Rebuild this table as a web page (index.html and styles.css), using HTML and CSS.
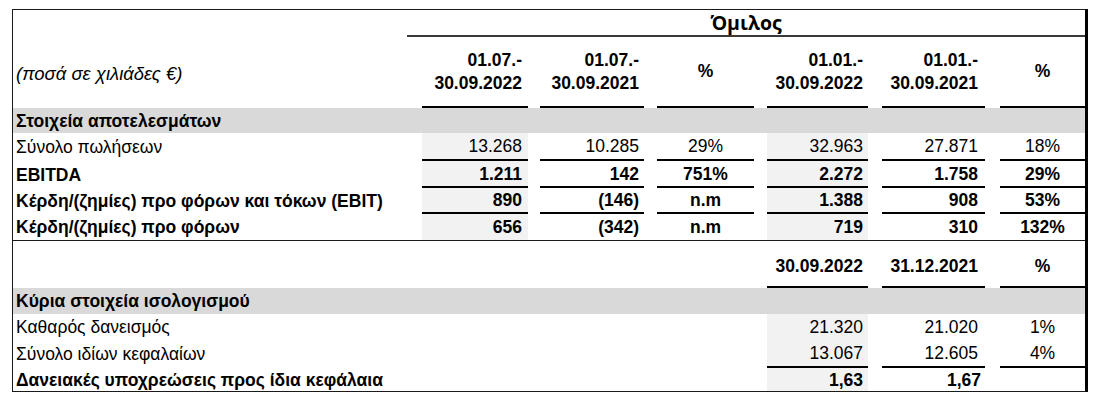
FILE: index.html
```html
<!DOCTYPE html>
<html lang="el">
<head>
<meta charset="utf-8">
<title>Όμιλος</title>
<link rel="stylesheet" href="styles.css">
</head>
<body>
<table class="fin">
  <colgroup>
    <col class="w-label">
    <col class="w-sp0">
    <col class="w-c1">
    <col class="w-sp1">
    <col class="w-c2">
    <col class="w-sp2">
    <col class="w-c3">
    <col class="w-sp3">
    <col class="w-c4">
    <col class="w-sp4">
    <col class="w-c5">
    <col class="w-sp5">
    <col class="w-c6">
  </colgroup>
  <tbody>
    <tr class="r-title">
      <td></td>
      <td colspan="12" class="title">Όμιλος</td>
    </tr>
    <tr class="r-head">
      <td class="label units">(ποσά σε χιλιάδες €)</td>
      <td></td>
      <td class="num b line p6">01.07.-<br>30.09.2022</td>
      <td></td>
      <td class="num b line">01.07.-<br>30.09.2021</td>
      <td></td>
      <td class="pct b line">%</td>
      <td></td>
      <td class="num b line">01.01.-<br>30.09.2022</td>
      <td></td>
      <td class="num b line p7">01.01.-<br>30.09.2021</td>
      <td></td>
      <td class="pct b line">%</td>
    </tr>
    <tr class="r-sec1">
      <td colspan="13" class="section">Στοιχεία αποτελεσμάτων</td>
    </tr>
    <tr class="r-1">
      <td class="label">Σύνολο πωλήσεων</td>
      <td></td>
      <td class="num shade line p6">13.268</td>
      <td></td>
      <td class="num line">10.285</td>
      <td></td>
      <td class="pct line">29%</td>
      <td></td>
      <td class="num shade line">32.963</td>
      <td></td>
      <td class="num line p7">27.871</td>
      <td></td>
      <td class="pct line">18%</td>
    </tr>
    <tr class="r-2 b">
      <td class="label">EBITDA</td>
      <td></td>
      <td class="num shade line p6">1.211</td>
      <td></td>
      <td class="num line">142</td>
      <td></td>
      <td class="pct line">751%</td>
      <td></td>
      <td class="num shade line">2.272</td>
      <td></td>
      <td class="num line p7">1.758</td>
      <td></td>
      <td class="pct line">29%</td>
    </tr>
    <tr class="r-3 b">
      <td class="label">Κέρδη/(ζημίες) προ φόρων και τόκων (EBIT)</td>
      <td></td>
      <td class="num shade line p6">890</td>
      <td></td>
      <td class="num line">(146)</td>
      <td></td>
      <td class="pct line">n.m</td>
      <td></td>
      <td class="num shade line">1.388</td>
      <td></td>
      <td class="num line p7">908</td>
      <td></td>
      <td class="pct line">53%</td>
    </tr>
    <tr class="r-4 b thin">
      <td class="label">Κέρδη/(ζημίες) προ φόρων</td>
      <td></td>
      <td class="num shade p6">656</td>
      <td></td>
      <td class="num">(342)</td>
      <td></td>
      <td class="pct">n.m</td>
      <td></td>
      <td class="num shade">719</td>
      <td></td>
      <td class="num p7">310</td>
      <td></td>
      <td class="pct">132%</td>
    </tr>
    <tr class="r-bhead">
      <td colspan="8"></td>
      <td class="num b line">30.09.2022</td>
      <td></td>
      <td class="num b line p7">31.12.2021</td>
      <td></td>
      <td class="pct b line">%</td>
    </tr>
    <tr class="r-sec2">
      <td colspan="13" class="section">Κύρια στοιχεία ισολογισμού</td>
    </tr>
    <tr class="r-b1">
      <td class="label">Καθαρός δανεισμός</td>
      <td colspan="7"></td>
      <td class="num shade">21.320</td>
      <td></td>
      <td class="num p7">21.020</td>
      <td></td>
      <td class="pct">1%</td>
    </tr>
    <tr class="r-b2">
      <td class="label">Σύνολο ιδίων κεφαλαίων</td>
      <td colspan="7"></td>
      <td class="num shade line">13.067</td>
      <td></td>
      <td class="num line p7">12.605</td>
      <td></td>
      <td class="pct line">4%</td>
    </tr>
    <tr class="r-b3 b">
      <td class="label">Δανειακές υποχρεώσεις προς ίδια κεφάλαια</td>
      <td colspan="7"></td>
      <td class="num shade">1,63</td>
      <td></td>
      <td class="num p4">1,67</td>
      <td></td>
      <td class="pct"></td>
    </tr>
  </tbody>
</table>
</body>
</html>
```

FILE: styles.css
```css
html, body {
  margin: 0;
  padding: 0;
  background: #ffffff;
}

body {
  padding: 9px 0 0 12px;
  font-family: "Liberation Sans", Arial, sans-serif;
  font-size: 17.5px;
  color: #000000;
}

.fin {
  table-layout: fixed;
  width: 1076px;
  border-collapse: separate;
  border-spacing: 0;
  border-top: 1px solid #1a1a1a;
  border-left: 1px solid #1a1a1a;
  border-bottom: 1px solid #1a1a1a;
  border-right: 3px solid #000000;
}

.w-label { width: 394px; }
.w-sp0 { width: 15px; }
.w-c1 { width: 106px; }
.w-sp1 { width: 12px; }
.w-c2 { width: 104px; }
.w-sp2 { width: 13px; }
.w-c3 { width: 97px; }
.w-sp3 { width: 13px; }
.w-c4 { width: 101px; }
.w-sp4 { width: 14px; }
.w-c5 { width: 103px; }
.w-sp5 { width: 15px; }
.w-c6 { width: 85px; }

.fin td {
  padding: 0;
  vertical-align: middle;
  white-space: nowrap;
  line-height: 20px;
}

.r-title { height: 27px; }
.r-head { height: 71px; }
.r-sec1 { height: 25px; }
.r-1 { height: 28px; }
.r-2 { height: 27px; }
.r-3 { height: 26px; }
.r-4 { height: 27px; }
.r-bhead { height: 47px; }
.r-sec2 { height: 26px; }
.r-b1 { height: 26px; }
.r-b2 { height: 28px; }
.r-b3 { height: 23px; }

.title {
  text-align: center;
  font-family: "Open Sans", "Noto Sans", sans-serif;
  font-weight: 700;
  font-size: 19.5px;
  line-height: 24px;
  border-bottom: 2px solid #3a3a3a;
}

.r-head td { line-height: 23px; }
.r-head .units {
  font-style: italic;
  font-size: 18.5px;
  padding-top: 2px;
}

.label {
  padding-left: 3px !important;
}

.section {
  background: #d9d9d9;
  font-weight: bold;
  padding-left: 3px !important;
}

.num {
  text-align: right;
  padding-right: 5px !important;
}
.num.p6 { padding-right: 6px !important; }
.num.p7 { padding-right: 7px !important; }
.num.p4 { padding-right: 4px !important; }

.pct { text-align: center; }

.b, .b td { font-weight: bold; }

.shade { background: #f2f2f2; }

.line { border-bottom: 2px solid #000000; }

.thin td { border-bottom: 1px solid #1a1a1a; }

.r-bhead td { padding-top: 4px; }
```
